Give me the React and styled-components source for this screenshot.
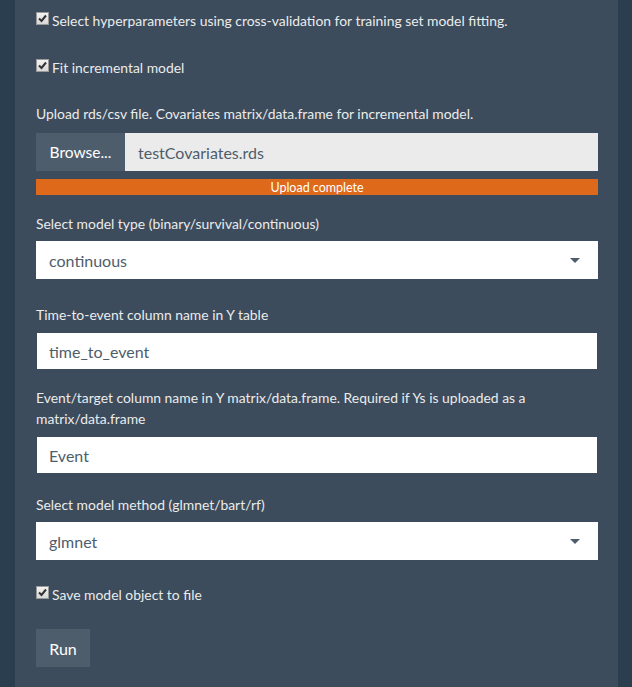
import React from 'react';
import styled, { createGlobalStyle } from 'styled-components';

const Global = createGlobalStyle`
  html, body { margin: 0; padding: 0; background: #2b3e50; }
  body { font-family: Lato, "Open Sans", sans-serif; color: #ebebeb; }
`;

const Page = styled.div`
  width: 632px;
  height: 687px;
  overflow: hidden;
  background: #2b3e50;
  padding: 0 14px 0 15px;
  box-sizing: border-box;
`;

const Panel = styled.div`
  background: #3c4c5c;
  height: 100%;
  padding: 10px 20px 0 21px;
  box-sizing: border-box;
`;

const Group = styled.div`
  margin-bottom: ${p => p.$mb}px;
`;

const CheckRow = styled.label`
  display: flex;
  align-items: center;
  height: 20px;
  font-size: 13.9px;
  gap: 3px;
`;

const Box = styled.span`
  width: 13px;
  height: 13px;
  box-sizing: border-box;
  border: 1px solid #9a9a9a;
  background: linear-gradient(#f2f2f2, #d8d8d8);
  display: inline-flex;
  align-items: center;
  justify-content: center;
  margin-top: -4px;
`;

const Label = styled.div`
  font-size: 13.9px;
  line-height: 21px;
  margin-bottom: ${p => p.$mb ?? 8}px;
`;

const FileRow = styled.div`
  display: flex;
  height: 38px;
`;

const Browse = styled.div`
  background: #4e5d6c;
  color: #fff;
  font-size: 15.5px;
  width: 89px;
  display: flex;
  align-items: center;
  justify-content: center;
`;

const FileName = styled.div`
  flex: 1;
  background: #ebebeb;
  color: #4e5d6c;
  font-size: 16px;
  display: flex;
  align-items: center;
  padding-left: 13px;
`;

const Progress = styled.div`
  margin-top: 8px;
  height: 16px;
  background: #df691a;
  color: #fff;
  font-size: 12.5px;
  display: flex;
  align-items: center;
  justify-content: center;
`;

const Field = styled.div`
  background: #fff;
  color: #4e5d6c;
  height: ${p => (p.$select ? 38 : 36)}px;
  margin: 0 ${p => (p.$select ? 0 : 1)}px;
  font-size: 16px;
  display: flex;
  align-items: center;
  justify-content: space-between;
  padding: 0 ${p => (p.$select ? 18 : 12)}px 0 ${p => (p.$select ? 13 : 12)}px;
`;

const Caret = styled.span`
  width: 0;
  height: 0;
  border-left: 5px solid transparent;
  border-right: 5px solid transparent;
  border-top: 5px solid #4e5d6c;
`;

const Button = styled.div`
  display: inline-flex;
  align-items: center;
  justify-content: center;
  width: 54px;
  height: 38px;
  background: #4e5d6c;
  color: #fff;
  font-size: 16px;
`;

const Check = ({ children }) => (
  <CheckRow>
    <Box>
      <svg width="9" height="9" viewBox="0 0 9 9">
        <path d="M1 4.5 L3.5 7 L8 1.5" fill="none" stroke="#333" strokeWidth="2" />
      </svg>
    </Box>
    {children}
  </CheckRow>
);

export default function App() {
  return (
    <Page>
      <Global />
      <Panel>
        <Group $mb={27}>
          <Check>Select hyperparameters using cross-validation for training set model fitting.</Check>
        </Group>
        <Group $mb={26}>
          <Check>Fit incremental model</Check>
        </Group>
        <Group $mb={18}>
          <Label $mb={9}>Upload rds/csv file. Covariates matrix/data.frame for incremental model.</Label>
          <FileRow>
            <Browse>Browse...</Browse>
            <FileName>testCovariates.rds</FileName>
          </FileRow>
          <Progress>Upload complete</Progress>
        </Group>
        <Group $mb={25}>
          <Label $mb={7}>Select model type (binary/survival/continuous)</Label>
          <Field $select>continuous<Caret /></Field>
        </Group>
        <Group $mb={18}>
          <Label $mb={8}>Time-to-event column name in Y table</Label>
          <Field>time_to_event</Field>
        </Group>
        <Group $mb={21}>
          <Label $mb={8}>Event/target column name in Y matrix/data.frame. Required if Ys is uploaded as a matrix/data.frame</Label>
          <Field>Event</Field>
        </Group>
        <Group $mb={24}>
          <Label $mb={7}>Select model method (glmnet/bart/rf)</Label>
          <Field $select>glmnet<Caret /></Field>
        </Group>
        <Group $mb={25}>
          <Check>Save model object to file</Check>
        </Group>
        <Button>Run</Button>
      </Panel>
    </Page>
  );
}
